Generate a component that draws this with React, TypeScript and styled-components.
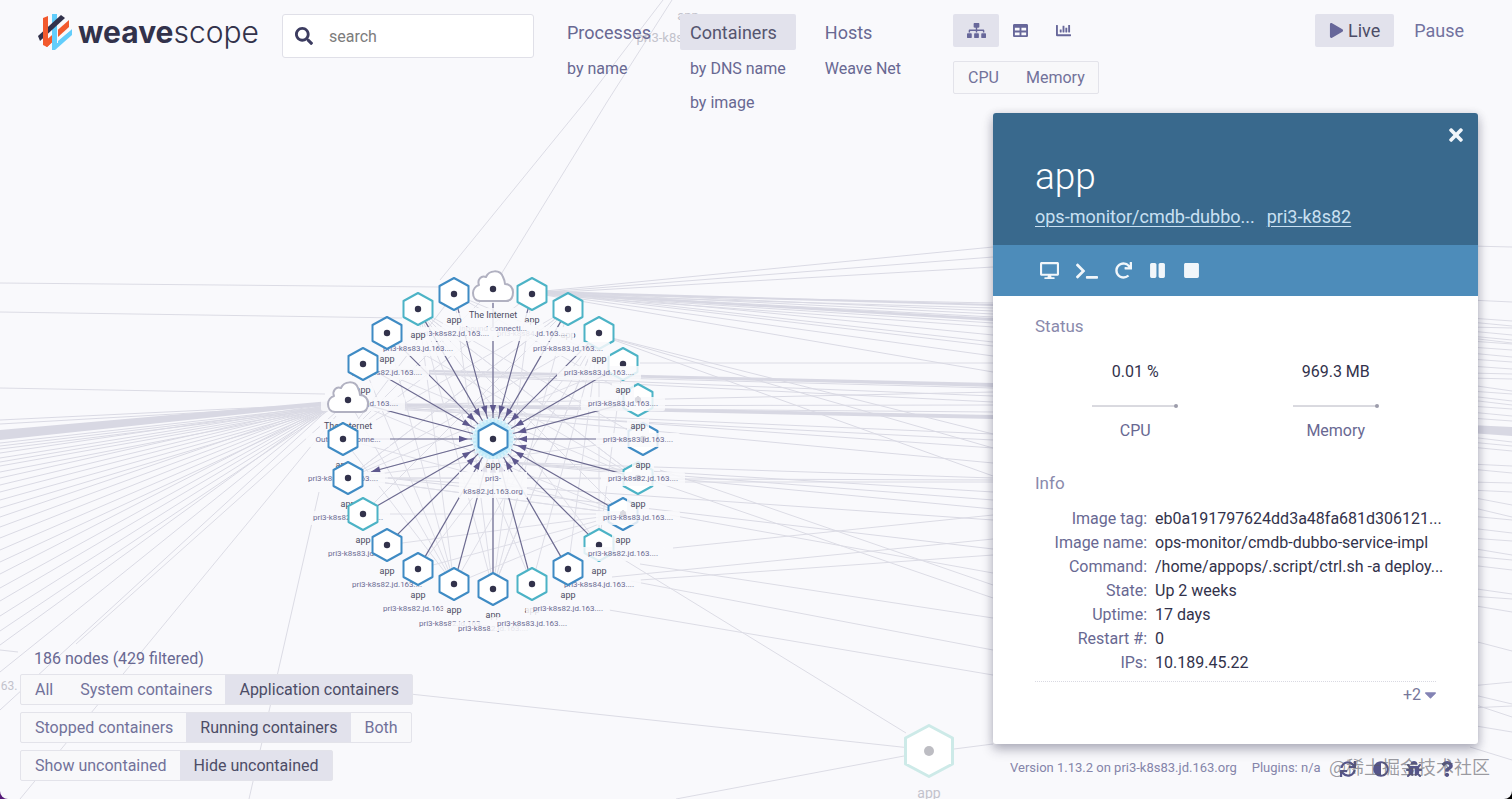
import React from 'react';
import styled, { createGlobalStyle, css } from 'styled-components';
import {
  FaAdjust, FaBug, FaCaretDown, FaChartBar, FaDesktop, FaPause, FaPlay, FaQuestion, FaRedo,
  FaSearch, FaSitemap, FaStop, FaSync, FaTable, FaTerminal, FaTimes,
} from 'react-icons/fa';

const sans = `Roboto, "Noto Sans", "Noto Sans CJK SC", sans-serif`;
const ink = '#32324b';
const purple = '#686892';
const muted = '#8a8aac';
const selected = '#e2e2ec';
const blue = '#3f8bc4';
const teal = '#4cb3c6';

const GlobalStyle = createGlobalStyle`
  *, *::before, *::after { box-sizing: border-box; }
  html { background: linear-gradient(90deg, #561a78 50%, #000 50%); }
  body { margin: 0; font-family: ${sans}; font-size: 16px; color: ${ink}; }
  button, input { font: inherit; }
  button { border: 0; padding: 0; background: none; cursor: pointer; }
  h1, h2, dl, dd, ul { margin: 0; padding: 0; font-weight: 400; list-style: none; }
`;

const Page = styled.div`
  position: relative;
  display: flex;
  flex-direction: column;
  min-height: 100vh;
  overflow: hidden;
  background: #f9f9fc;
  border-radius: 0 0 8px 8px;
`;

const Canvas = styled.svg`
  position: absolute;
  inset: 0;
  width: 100%;
  height: 100%;
`;

const Header = styled.header`
  position: relative;
  display: flex;
  align-items: flex-start;
  padding: 14px 34px 0 38px;
`;

const Logo = styled.a`
  display: flex;
  align-items: center;
  gap: 5px;
  width: 244px;
  height: 36px;
  color: ${ink};
  font-family: Inter, ${sans};
  font-size: 30px;
  font-weight: 300;
  text-decoration: none;
  b { font-weight: 700; }
`;

const Search = styled.label`
  display: flex;
  align-items: center;
  width: 252px;
  height: 44px;
  padding: 0 12px;
  gap: 16px;
  background: #fff;
  border: 1px solid #e0e0e8;
  border-radius: 3px;
  color: #3c3c60;
  font-size: 18px;
`;

const SearchInput = styled.input`
  flex: 1;
  min-width: 0;
  border: 0;
  padding: 0;
  outline: 0;
  background: none;
  font-size: 16px;
  &::placeholder { color: #7c7c7c; opacity: 1; }
`;

const Topics = styled.nav`
  display: flex;
  gap: 19px;
  margin: 0 42px 0 23px;
`;

const Topic = styled.div`
  display: flex;
  flex-direction: column;
  align-items: stretch;
  gap: 14px;
`;

const TopicName = styled.button<{ $active?: boolean }>`
  height: 36px;
  margin-bottom: -5px;
  padding: 0 10px;
  text-align: left;
  font-size: 18px;
  color: ${p => (p.$active ? '#55556f' : purple)};
  background: ${p => (p.$active ? selected : 'transparent')};
  border-radius: 2px;
`;

const SubTopic = styled.button`
  height: 20px;
  padding: 0 10px;
  line-height: 20px;
  text-align: left;
  color: ${purple};
`;

const ViewArea = styled.div`
  display: flex;
  flex-direction: column;
  align-items: flex-start;
  gap: 14px;
`;

const Row = styled.div`
  display: flex;
`;

const ViewButton = styled.button<{ $active?: boolean; $wide?: boolean }>`
  display: grid;
  place-items: center;
  width: ${p => (p.$active ? 46 : 43)}px;
  height: 33px;
  font-size: ${p => (p.$wide ? 19 : 15)}px;
  color: #67679a;
  background: ${p => (p.$active ? selected : 'transparent')};
  border-radius: 2px;
`;

const Segments = styled.div`
  display: inline-flex;
  align-self: flex-start;
  border: 1px solid #e3e3ea;
  border-radius: 2px;
  background: #f8f8fa;
`;

const Segment = styled.button<{ $active?: boolean; $tall?: boolean }>`
  height: ${p => (p.$tall ? 31 : 29)}px;
  padding: 0 13px 0 14px;
  white-space: nowrap;
  color: ${p => (p.$active ? '#4c4c66' : '#72729a')};
  background: ${p => (p.$active ? selected : 'transparent')};
`;

const TimeControl = styled(Row)`
  gap: 6px;
  margin-left: auto;
`;

const TimeButton = styled.button<{ $active?: boolean }>`
  display: flex;
  align-items: center;
  justify-content: center;
  gap: 4px;
  height: 33px;
  padding: 0 14px;
  font-size: 18px;
  color: ${p => (p.$active ? '#4c4c66' : '#72729f')};
  svg { font-size: 15px; color: #67679a; }
  ${p => p.$active && css`background: ${selected}; border-radius: 2px;`}
`;

const Main = styled.main`
  position: relative;
  flex: 1;
  display: flex;
  justify-content: space-between;
  padding: 0 34px 0 20px;
`;

const Filters = styled.section`
  display: flex;
  flex-direction: column;
  justify-content: flex-end;
  gap: 7px;
  padding-bottom: 18px;
`;

const Count = styled.div`
  padding-left: 14px;
  line-height: 18px;
  margin-bottom: -1px;
  color: ${purple};
`;

const Side = styled.div`
  display: flex;
  flex-direction: column;
  width: 485px;
`;

const Panel = styled.article`
  background: #fff;
  border-radius: 3px;
  overflow: hidden;
  box-shadow: 0 6px 12px rgba(30, 30, 60, 0.28), 0 1px 10px rgba(30, 30, 60, 0.14);
`;

const PanelHead = styled.div`
  display: flex;
  flex-direction: column;
  height: 132px;
  padding: 12px 12px 0 42px;
  color: #fff;
  background: #39698d;
`;

const CloseButton = styled.button`
  align-self: flex-end;
  height: 20px;
  color: #f1f6fa;
  font-size: 20px;
  line-height: 0;
`;

const Title = styled.h1`
  margin-top: 11px;
  font-size: 37px;
  font-weight: 300;
  line-height: 42px;
`;

const Parents = styled.div`
  display: flex;
  gap: 12px;
  margin-top: 7px;
  font-size: 18px;
  line-height: 24px;
  color: #c9e0f2;
  a { color: inherit; text-underline-offset: 3px; text-decoration-thickness: 1px; }
`;

const Controls = styled.div`
  display: flex;
  align-items: center;
  gap: 17px;
  height: 51px;
  padding: 0 47px;
  background: #4d8cba;
`;

const ControlButton = styled.button<{ $size?: number }>`
  color: #f1f6fa;
  font-size: ${p => p.$size ?? 17}px;
  line-height: 0;
`;

const PanelBody = styled.div`
  padding: 18px 42px 38px;
`;

const SectionTitle = styled.h2`
  font-size: 17px;
  line-height: 25px;
  color: ${muted};
`;

const Metrics = styled.div`
  display: grid;
  grid-template-columns: 1fr 1fr;
  justify-items: center;
  margin: 21px 0 28px;
`;

const Metric = styled.div`
  display: flex;
  flex-direction: column;
  align-items: center;
  line-height: 24px;
  span { color: ${purple}; }
  svg { margin: 17px 0 8px; }
`;

const Info = styled.dl`
  display: grid;
  grid-template-columns: 112px 1fr;
  column-gap: 8px;
  margin-top: 11px;
  padding-bottom: 6px;
  line-height: 24px;
  border-bottom: 1px dotted #d9d9e2;
  dt { text-align: right; color: ${purple}; }
  dd { white-space: nowrap; }
`;

const More = styled.button`
  display: flex;
  align-items: center;
  margin: 0 -4px 0 auto;
  height: 24px;
  color: #77779a;
  svg { font-size: 19px; color: #8383b4; }
`;

const Footer = styled.footer`
  display: flex;
  align-items: center;
  height: 24px;
  margin: 11px 0 20px;
  padding-left: 17px;
  font-size: 13px;
  color: #8585aa;
`;

const Plugins = styled.span`
  margin-left: 15px;
`;

const Tools = styled.div`
  display: flex;
  align-items: center;
  gap: 17px;
  margin: 4px 23px 0 auto;
  button { color: #55558a; font-size: 16px; line-height: 0; }
`;

const Watermark = styled.div`
  position: absolute;
  right: 22px;
  bottom: 21px;
  font-family: "Noto Sans CJK SC", sans-serif;
  font-size: 18px;
  line-height: 24px;
  color: rgba(90, 90, 100, 0.6);
  pointer-events: none;
`;

/* ---- Topology graph ---- */

type Kind = 'blue' | 'teal' | 'cloud';
type GraphNode = { x: number; y: number; kind: Kind; host: string; arrow?: 'out' | 'none' };

const h = (n: number) => `pri3-k8s${n}.jd.163....`;

/* In paint order: each node and its label lie over the ones before it. */
const nodes: GraphNode[] = [
  { x: 599, y: 545, kind: 'teal', host: h(84) },
  { x: 623, y: 514, kind: 'blue', host: h(82) },
  { x: 638, y: 478, kind: 'teal', host: h(83) },
  { x: 643, y: 439, kind: 'blue', host: h(82) },
  { x: 638, y: 400, kind: 'teal', host: h(83) },
  { x: 623, y: 364, kind: 'teal', host: h(83) },
  { x: 599, y: 333, kind: 'teal', host: h(83) },
  { x: 568, y: 309, kind: 'teal', host: h(83) },
  { x: 532, y: 294, kind: 'teal', host: h(84) },
  { x: 493, y: 289, kind: 'cloud', host: 'Inbound connecti...' },
  { x: 454, y: 294, kind: 'blue', host: h(82) },
  { x: 418, y: 309, kind: 'teal', host: h(83) },
  { x: 387, y: 333, kind: 'blue', host: h(82) },
  { x: 363, y: 364, kind: 'blue', host: h(82) },
  { x: 348, y: 400, kind: 'cloud', host: 'Outbound conne...', arrow: 'none' },
  { x: 343, y: 439, kind: 'blue', host: h(83) },
  { x: 348, y: 478, kind: 'blue', host: h(82), arrow: 'out' },
  { x: 363, y: 514, kind: 'teal', host: h(83) },
  { x: 387, y: 545, kind: 'blue', host: h(82) },
  { x: 418, y: 569, kind: 'blue', host: h(82) },
  { x: 454, y: 584, kind: 'blue', host: h(82) },
  { x: 493, y: 589, kind: 'blue', host: h(82) },
  { x: 532, y: 584, kind: 'teal', host: h(83) },
  { x: 568, y: 569, kind: 'blue', host: h(82) },
];

const center = { x: 493, y: 439 };

const HEX = 'M0 -16 L14.5 -8 V8 L0 16 L-14.5 8 V-8 Z';
const CLOUD =
  'M-13 12 C-18 12 -20 8 -20 4 C-20 0 -17 -3 -14 -4 C-16 -9 -12 -14 -7 -12 C-4 -19 7 -20 10 -12 C11 -10 12 -8 12 -5 C17 -5 20 -1 20 3 C20 8 18 12 13 12 Z';

const Shape = ({ kind }: { kind: Kind }) => (
  <>
    <path
      d={kind === 'cloud' ? CLOUD : HEX}
      fill="#fff"
      stroke={kind === 'cloud' ? '#b1b1c1' : kind === 'blue' ? blue : teal}
      strokeWidth="2"
      strokeLinejoin="round"
    />
    <circle r="3.2" fill={ink} />
  </>
);

const NodeView = ({ x, y, kind, host }: GraphNode) => (
  <g transform={`translate(${x} ${y})`} textAnchor="middle">
    <Shape kind={kind} />
    <rect x={kind === 'cloud' ? -28 : -11} y="19" width={kind === 'cloud' ? 56 : 22} height="14" fill="#f9f9fc" fillOpacity="0.85" />
    <rect x="-42" y="33" width="84" height="14" rx="2" fill="#f9f9fc" fillOpacity="0.85" />
    <text y="29" fontSize="9" fill="#4c4c62">{kind === 'cloud' ? 'The Internet' : 'app'}</text>
    <text y="42" fontSize="8" fill="#6c6c93">{host}</text>
  </g>
);

const Spoke = ({ x, y, arrow }: GraphNode) => {
  const dx = (x - center.x) / 150;
  const dy = (y - center.y) / 150;
  const angle = (Math.atan2(dy, dx) * 180) / Math.PI;
  const at = (r: number) => [center.x + dx * r, center.y + dy * r];
  const [x1, y1] = at(21);
  const [x2, y2] = at(arrow === 'out' ? 126 : 136);
  const [ax, ay] = at(arrow === 'out' ? 126 : 25);
  return (
    <g>
      <line x1={x1} y1={y1} x2={x2} y2={y2} stroke="#6c6a90" strokeWidth="1.2" />
      {arrow !== 'none' && (
        <path
          d="M0 0 L9 -3.2 V3.2 Z"
          fill="#5e588e"
          transform={`translate(${ax} ${ay}) rotate(${arrow === 'out' ? angle + 180 : angle})`}
        />
      )}
    </g>
  );
};

type Line = [number, number, number, number];

const fan = (x: number, y: number, toX: number, ys: number[], spread = 0): Line[] =>
  ys.map((ty, i) => [x, y + (i % 5) * spread, toX, ty]);

const leftFan = fan(332, 404, 0, [
  420, 424, 443, 446, 449, 453, 458, 462, 466, 472, 478, 485, 492, 500, 508, 517, 527, 538, 550, 562, 574, 588, 601, 616, 631, 645, 672, 710,
], 1);

const rightFan = [
  ...fan(545, 291, 993, [247, 257, 267, 303, 308, 311, 314, 317, 323, 327, 335, 342, 346, 356, 372], 1),
  ...fan(600, 335, 993, [434, 448, 476]),
  ...fan(388, 372, 993, [388, 396, 402]),
  ...fan(388, 405, 993, [392, 405, 412, 434, 440, 448, 463], 1),
  ...fan(500, 462, 993, [478, 492, 500, 509]),
  ...fan(388, 478, 993, [480, 520, 549]),
];

const far: Line[] = [
  [440, 287, 0, 283], [402, 318, 0, 312], [325, 394, 0, 388],
  [640, 363, 993, 363],
  [585, 102, 440, 280], [663, 0, 585, 102],
  [607, 102, 500, 276], [672, 0, 607, 102],
  [336, 416, 20, 799], [319, 492, 249, 799], [336, 412, 76, 644],
  [0, 650, 18, 652],
  [410, 694, 929, 750], [600, 545, 906, 733], [676, 799, 904, 756], [954, 749, 993, 744],
  [673, 548, 993, 515], [612, 577, 993, 539], [640, 580, 993, 555],
  [609, 610, 993, 675], [631, 581, 993, 650], [640, 564, 993, 618],
  [670, 515, 993, 573], [660, 470, 993, 585], [650, 480, 993, 598], [670, 482, 993, 482],
];

const edgeRight: Line[] = [
  [246, 247], [300, 302], [318, 321], [322, 326], [327, 328], [331, 335], [336, 340], [338, 343], [341, 344],
  [347, 350], [353, 357], [359, 362], [366, 369], [373, 374], [378, 379], [385, 391], [391, 394], [396, 401],
  [400, 405], [406, 409], [412, 416], [418, 421], [437, 442], [442, 446], [447, 451], [464, 466], [469, 473],
  [482, 483], [490, 492], [497, 505], [507, 517], [516, 520], [528, 533], [538, 541], [548, 555], [556, 560],
  [565, 570], [588, 594], [596, 599], [605, 612], [640, 651], [686, 682], [694, 704], [703, 717], [708, 706],
  [725, 732], [747, 760],
].map(([a, b]) => [1470, a, 1512, b] as Line);

const chords: Line[] = Array.from({ length: 50 }, (_, i) => {
  const a = nodes[(i * 7) % 24];
  const b = nodes[(i * 7 + 5 + ((i * 3) % 11)) % 24];
  return [a.x, a.y, b.x, b.y];
});

const Lines = ({ lines, color = '#dcdce5', width = 1 }: { lines: Line[]; color?: string; width?: number }) => (
  <g stroke={color} strokeWidth={width}>
    {lines.map(([x1, y1, x2, y2], i) => <line key={i} x1={x1} y1={y1} x2={x2} y2={y2} />)}
  </g>
);

const Graph = () => (
  <Canvas role="img" aria-label="Container topology">
    <Lines lines={[...far, ...edgeRight]} />
    <Lines lines={[...leftFan, ...rightFan]} color="#dadae4" />
    <g fill="#d8d8e3">
      <path d="M330 401 L0 430 V440 L330 405 Z" />
      <path d="M545 291 L993 304 V306 L545 293 Z" />
      <path d="M545 292 L993 318 V321 L545 294 Z" />
      <path d="M390 369 L993 383 V387 L390 371 Z" />
      <path d="M390 403 L993 415 V419 L390 406 Z" />
      <path d="M1470 425 L1512 427 V436 L1470 433 Z" />
    </g>
    <Lines lines={chords} color="#dedee7" />
    <g textAnchor="middle" fill="#c3c3cc" fontSize="13">
      <text x="688" y="20">app</text>
      <text x="674" y="42">pri3-k8s82.jd</text>
      <text x="9" y="690" fontSize="12">63.</text>
      <text x="929" y="798" fontSize="14">app</text>
    </g>
    <g transform="translate(929 751)">
      <path d="M0 -25.500 L23.500 -13 V13 L0 25.500 L-23.500 13 V-13 Z" fill="#fff" stroke="#cdeae8" strokeWidth="3" strokeLinejoin="round" />
      <circle r="5" fill="#bdbdc3" />
    </g>
    <circle cx={center.x} cy={center.y} r="20" fill="#c3ebf9" />
    <circle cx={center.x} cy={center.y} r="20" fill="none" stroke="#d9f2fb" strokeWidth="5" strokeDasharray="2 2" />
    {nodes.map((n, i) => <Spoke key={i} {...n} />)}
    <g transform={`translate(${center.x} ${center.y})`} textAnchor="middle">
      <Shape kind="blue" />
      <rect x="-11" y="20" width="22" height="13" fill="#f9f9fc" fillOpacity="0.85" />
      <rect x="-34" y="33" width="68" height="26" fill="#f9f9fc" fillOpacity="0.9" />
      <text y="29" fontSize="9" fill="#4c4c62">app</text>
      <text y="42" fontSize="8" fill="#6c6c93">pri3-</text>
      <text y="55" fontSize="8" fill="#6c6c93">k8s82.jd.163.org</text>
    </g>
    {nodes.map((n, i) => <NodeView key={i} {...n} />)}
  </Canvas>
);

const LogoMark = () => (
  <svg width="35" height="36" viewBox="0 0 35 36">
    <path d="M5 29 L31 6 V13 L9 33 Z" fill="#f2592d" />
    <path d="M14 0 H19 V34 L14 36 Z" fill="#62cdfb" />
    <path d="M14 34 L19 27 L34 15 V21 L17 36 H14 Z" fill="#62cdfb" />
    <path d="M0 22 L23 1 L27 4 L2 27 Z" fill={ink} />
    <path d="M5 4 L10 2 V27 L14 25 V28 L9 33 L5 31 Z" fill="#f2592d" />
    <path d="M14 17 L19 13 V34 H14 Z" fill="#62cdfb" />
    <path d="M19.500 13 V29" stroke="#f9f9fc" strokeWidth="1" />
    <path d="M19.500 26.500 L33 15" stroke="#f9f9fc" strokeWidth="1.500" />
  </svg>
);

const Spark = () => (
  <svg width="88" height="10" viewBox="0 0 88 10">
    <path d="M1 5 H85" stroke="#b4b4c0" />
    <circle cx="85" cy="5" r="2" fill="#9c9cab" />
  </svg>
);

const topics = [
  { name: 'Processes', subs: ['by name'] },
  { name: 'Containers', subs: ['by DNS name', 'by image'], active: true },
  { name: 'Hosts', subs: ['Weave Net'] },
];

const filters = [
  { options: ['All', 'System containers', 'Application containers'], active: 2 },
  { options: ['Stopped containers', 'Running containers', 'Both'], active: 1 },
  { options: ['Show uncontained', 'Hide uncontained'], active: 1 },
];

const info = [
  ['Image tag', 'eb0a191797624dd3a48fa681d306121...'],
  ['Image name', 'ops-monitor/cmdb-dubbo-service-impl'],
  ['Command', '/home/appops/.script/ctrl.sh -a deploy...'],
  ['State', 'Up 2 weeks'],
  ['Uptime', '17 days'],
  ['Restart #', '0'],
  ['IPs', '10.189.45.22'],
];

export default function App() {
  return (
    <Page>
      <GlobalStyle />
      <Graph />
      <Header>
        <Logo href="#" aria-label="Weave Scope">
          <LogoMark />
          <span><b>weave</b>scope</span>
        </Logo>
        <Search>
          <FaSearch />
          <SearchInput type="text" placeholder="search" aria-label="search" />
        </Search>
        <Topics>
          {topics.map(t => (
            <Topic key={t.name}>
              <TopicName $active={t.active}>{t.name}</TopicName>
              {t.subs.map(s => <SubTopic key={s}>{s}</SubTopic>)}
            </Topic>
          ))}
        </Topics>
        <ViewArea>
          <Row>
            <ViewButton $active $wide aria-label="Graph"><FaSitemap /></ViewButton>
            <ViewButton aria-label="Table"><FaTable /></ViewButton>
            <ViewButton aria-label="Resources"><FaChartBar /></ViewButton>
          </Row>
          <Segments>
            <Segment $tall>CPU</Segment>
            <Segment $tall>Memory</Segment>
          </Segments>
        </ViewArea>
        <TimeControl>
          <TimeButton $active><FaPlay />Live</TimeButton>
          <TimeButton>Pause</TimeButton>
        </TimeControl>
      </Header>
      <Main>
        <Filters>
          <Count>186 nodes (429 filtered)</Count>
          {filters.map(f => (
            <Segments key={f.options[0]}>
              {f.options.map((o, i) => <Segment key={o} $active={i === f.active}>{o}</Segment>)}
            </Segments>
          ))}
        </Filters>
        <Side>
          <Panel>
            <PanelHead>
              <CloseButton aria-label="Close"><FaTimes /></CloseButton>
              <Title>app</Title>
              <Parents>
                <span><a href="#">ops-monitor/cmdb-dubbo</a>...</span>
                <a href="#">pri3-k8s82</a>
              </Parents>
            </PanelHead>
            <Controls>
              <ControlButton $size={19} aria-label="Attach"><FaDesktop /></ControlButton>
              <ControlButton $size={22} aria-label="Exec shell"><FaTerminal /></ControlButton>
              <ControlButton aria-label="Restart"><FaRedo /></ControlButton>
              <ControlButton aria-label="Pause"><FaPause /></ControlButton>
              <ControlButton aria-label="Stop"><FaStop /></ControlButton>
            </Controls>
            <PanelBody>
              <SectionTitle>Status</SectionTitle>
              <Metrics>
                <Metric>0.01 %<Spark /><span>CPU</span></Metric>
                <Metric>969.3 MB<Spark /><span>Memory</span></Metric>
              </Metrics>
              <SectionTitle>Info</SectionTitle>
              <Info>
                {info.map(([k, v]) => (
                  <React.Fragment key={k}>
                    <dt>{k}:</dt>
                    <dd>{v}</dd>
                  </React.Fragment>
                ))}
              </Info>
              <More>+2<FaCaretDown /></More>
            </PanelBody>
          </Panel>
          <Footer>
            <span>Version 1.13.2 on pri3-k8s83.jd.163.org</span>
            <Plugins>Plugins: n/a</Plugins>
            <Tools>
              <button aria-label="Reload"><FaSync /></button>
              <button aria-label="Contrast"><FaAdjust /></button>
              <button aria-label="Report a bug"><FaBug /></button>
              <button aria-label="Help"><FaQuestion /></button>
            </Tools>
          </Footer>
        </Side>
      </Main>
      <Watermark>@稀土掘金技术社区</Watermark>
    </Page>
  );
}
